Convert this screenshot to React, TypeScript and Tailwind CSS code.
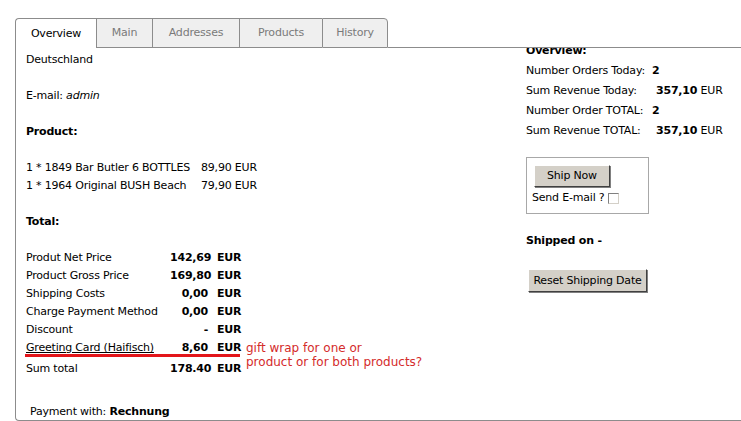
const TABS = [
  { label: 'Overview', w: 'w-[81px]' },
  { label: 'Main', w: 'w-[56px]' },
  { label: 'Addresses', w: 'w-[87px]' },
  { label: 'Products', w: 'w-[83px]' },
  { label: 'History', w: 'w-[66px]' },
]

const ITEMS = [
  { name: '1 * 1849 Bar Butler 6 BOTTLES', price: '89,90 EUR' },
  { name: '1 * 1964 Original BUSH Beach', price: '79,90 EUR' },
]

const TOTALS = [
  { label: 'Produt Net Price', value: '142,69' },
  { label: 'Product Gross Price', value: '169,80' },
  { label: 'Shipping Costs', value: '0,00' },
  { label: 'Charge Payment Method', value: '0,00' },
  { label: 'Discount', value: '-' },
]

const STATS = [
  { label: 'Number Orders Today:', value: '2', eur: false },
  { label: 'Sum Revenue Today:', value: '357,10', eur: true },
  { label: 'Number Order TOTAL:', value: '2', eur: false },
  { label: 'Sum Revenue TOTAL:', value: '357,10', eur: true },
]

export default function App() {
  return (
    <div className="w-[741px] h-[421px] overflow-hidden bg-white font-['DejaVu_Sans','Verdana',sans-serif] text-[11px] tracking-[-0.2px] text-black">
      <div className="ml-[15px] pt-[18px] w-[800px]">
        {/* Tabs */}
        <div className="relative z-10 flex h-[30px] bg-white">
          {TABS.map((tab, i) =>
            i === 0 ? (
              <div
                key={tab.label}
                className={`${tab.w} flex items-center justify-center pt-[1px] border-l border-t border-[#8c8c8c] rounded-tl-[4px] bg-white`}
              >
                {tab.label}
              </div>
            ) : (
              <div
                key={tab.label}
                className={`${tab.w} flex items-center justify-center pt-[1px] border-l border-t border-b border-[#8c8c8c] bg-[#efefef] text-[#7a7a7a] ${
                  i === TABS.length - 1 ? 'border-r rounded-tr-[4px]' : ''
                }`}
              >
                {tab.label}
              </div>
            )
          )}
          <div className="flex-1 border-b border-[#8c8c8c]" />
        </div>

        {/* Panel */}
        <div className="flex h-[373px] border-l border-b border-[#8c8c8c] rounded-bl-[4px]">
          {/* Left column */}
          <div className="w-[510px] pl-[10px] pt-[3px] leading-[18px]">
            <div>Deutschland</div>
            <div className="mt-[18px]">
              E-mail: <i>admin</i>
            </div>
            <div className="mt-[18px] font-bold">Product:</div>
            <div className="mt-[18px]">
              {ITEMS.map(item => (
                <div key={item.name} className="flex">
                  <span className="w-[175px]">{item.name}</span>
                  <span>{item.price}</span>
                </div>
              ))}
            </div>
            <div className="mt-[18px] font-bold">Total:</div>

            <div className="relative mt-[18px] w-[420px]">
              {TOTALS.map(row => (
                <div key={row.label} className="flex">
                  <span className="w-[144px]">{row.label}</span>
                  <span className="w-[38px] text-right font-bold">{row.value}</span>
                  <span className="ml-[9px] font-bold">EUR</span>
                </div>
              ))}
              <div className="flex h-[18px]">
                <span className="w-[144px] underline">Greeting Card (Haifisch)</span>
                <span className="w-[38px] text-right font-bold">8,60</span>
                <span className="ml-[9px] font-bold">EUR</span>
              </div>
              {/* red annotation drawn over the table */}
              <div className="absolute left-[-1px] top-[105px] h-[3px] w-[215px] bg-[#e3151a]" />
              <div className="absolute left-[220px] top-[92px] text-[12px] leading-[14px] tracking-normal text-[#d42b2b]">
                gift wrap for one or
                <br />
                product or for both products?
              </div>
              <div className="mt-[3px] flex">
                <span className="w-[144px]">Sum total</span>
                <span className="w-[38px] text-right font-bold">178.40</span>
                <span className="ml-[9px] font-bold">EUR</span>
              </div>
            </div>

            <div className="mt-[25px] pl-[4px]">
              Payment with: <b>Rechnung</b>
            </div>
          </div>

          {/* Right column */}
          <div className="-mt-[7px] w-[230px] leading-[20px]">
            <div className="font-bold">Overview:</div>
            {STATS.map(s => (
              <div key={s.label} className="flex">
                <span className="w-[126px]">{s.label}</span>
                <span className={s.eur ? 'ml-[4px]' : ''}>
                  <b>{s.value}</b>
                  {s.eur && ' EUR'}
                </span>
              </div>
            ))}

            <div className="mt-[16px] w-[123px] h-[57px] border border-[#a8a8a8] pl-[7px] pt-[7px] leading-[18px]">
              <button className="block w-[76px] h-[22px] bg-[#d4d0c8] border border-t-white border-l-white border-r-[#404040] border-b-[#404040] shadow-[1px_1px_0_#808080] text-[11px] tracking-[-0.2px]">
                Ship Now
              </button>
              <div className="-ml-[2px] mt-[2px] flex items-center">
                <span>Send E-mail ?</span>
                <span className="ml-[4px] inline-block w-[11px] h-[11px] border border-t-[#808080] border-l-[#808080] border-r-[#d4d0c8] border-b-[#d4d0c8] bg-white" />
              </div>
            </div>

            <div className="mt-[18px] leading-[18px] font-bold">Shipped on -</div>

            <button className="ml-[2px] mt-[19px] block w-[119px] h-[23px] bg-[#d4d0c8] border border-t-white border-l-white border-r-[#404040] border-b-[#404040] shadow-[1px_1px_0_#808080] text-[11px] tracking-[-0.2px]">
              Reset Shipping Date
            </button>
          </div>
        </div>
      </div>
    </div>
  )
}
